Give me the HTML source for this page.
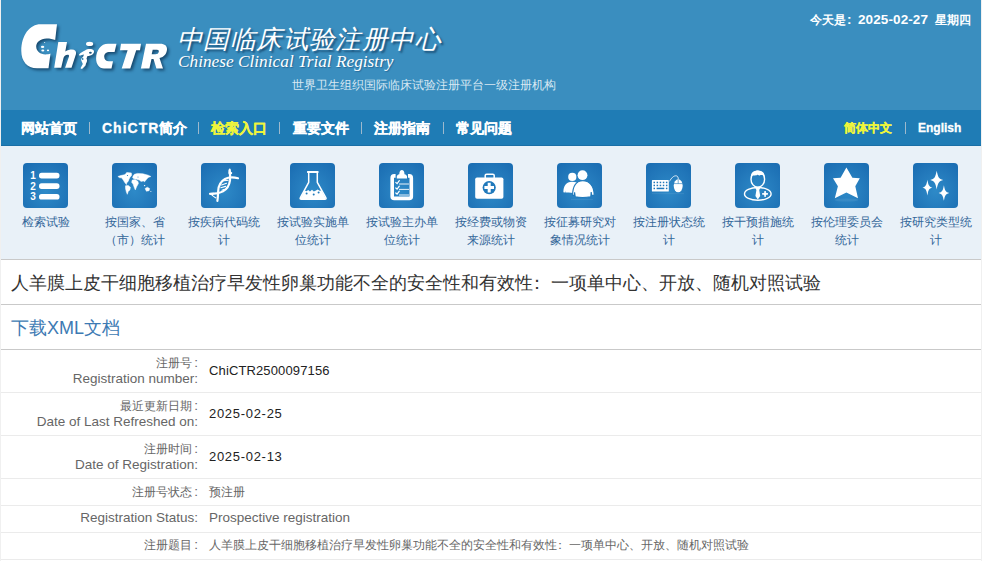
<!DOCTYPE html>
<html><head><meta charset="utf-8">
<style>
*{margin:0;padding:0;box-sizing:border-box;}
html,body{width:982px;height:561px;overflow:hidden;background:#fff;font-family:"Liberation Sans",sans-serif;}
#wrap{position:absolute;left:1px;top:0;width:980px;height:561px;}
body:before{content:"";position:absolute;left:0;top:0;width:1px;height:561px;background:#f0f0f0;}
body:after{content:"";position:absolute;left:981px;top:0;width:1px;height:561px;background:#f0f0f0;}
#header{position:absolute;left:0;top:0;width:980px;height:110px;background:#3a8ebf;}
.td{position:absolute;top:11px;font-size:12px;line-height:18px;color:#fff;font-weight:bold;white-space:nowrap;}
.td.n{font-size:13.5px;letter-spacing:.1px;}
#cn{position:absolute;left:176px;top:24px;font-family:"Liberation Serif",serif;font-size:25.5px;line-height:32px;color:#fff;font-weight:500;font-style:italic;text-shadow:2px 2px 2px rgba(0,30,60,.55);letter-spacing:.4px;}
#en{position:absolute;left:177px;top:52px;font-family:"Liberation Serif",serif;font-size:17.3px;line-height:20px;color:#fff;font-style:italic;text-shadow:1px 1px 1px rgba(0,40,80,.35);}
#who{position:absolute;left:291px;top:76px;font-size:12px;line-height:18px;color:#d8e8f3;}
#logo{position:absolute;left:-1px;top:0;}
#nav{position:absolute;left:0;top:110px;width:980px;height:36px;background:#1f7cb5;border-bottom:1px solid #1a6fa6;}
#nav span{position:absolute;top:0;line-height:36px;font-size:14px;font-weight:bold;color:#fff;-webkit-text-stroke:.3px currentColor;}
#nav span.sep{font-size:0;top:12px;width:1px;height:12px;background:#9db9cd;line-height:0;}
#nav span.y{color:#eef53c;}
#nav span.sm{font-size:12px;}
#icons{position:absolute;left:0;top:146px;width:980px;height:113px;background:#e9f1f8;}
.it{position:absolute;top:0;width:89px;height:113px;text-align:center;}
.ic{position:absolute;left:22px;top:17px;width:45px;height:45px;border-radius:4px;background:radial-gradient(ellipse 70% 75% at 50% 62%,#2e8ac8 0%,#2379bb 60%,#1b6eb3 100%);}
.ic svg{position:absolute;left:0;top:0;}
.lb{position:absolute;left:5px;top:68px;width:79px;font-size:12px;line-height:17.5px;color:#336699;text-align:center;}
#title{position:absolute;left:0;top:259px;width:980px;height:46px;border-top:1px solid #c9c9c9;border-bottom:1px solid #c9c9c9;font-size:18px;line-height:42px;padding-top:2px;color:#333;font-weight:350;padding-left:10px;}
#dl{position:absolute;left:0;top:305px;width:980px;height:45px;border-bottom:1px solid #c9c9c9;font-size:18px;line-height:42px;padding-top:2px;color:#3d7ab3;font-weight:350;padding-left:10px;}
#tbl{position:absolute;left:0;top:350px;width:980px;}
.row{position:absolute;left:0;width:980px;border-bottom:1px solid #ebebeb;}
.l{position:absolute;right:783px;width:200px;text-align:right;font-size:12px;line-height:16px;color:#666;}
.c{font-size:13.5px;padding-left:2px;}
.v{position:absolute;left:208px;font-size:12px;line-height:16px;color:#666;white-space:nowrap;}
.v.d{font-size:13px;color:#222;}
.dt{letter-spacing:.7px;}
.e{font-size:13.5px;}
</style></head><body>
<div id="wrap">
 <div id="header">
  <svg id="logo" width="180" height="80" viewBox="0 0 180 80">
  <g fill="#fff" style="filter:drop-shadow(2px 2px 1.5px rgba(0,30,60,.6))">
  <path fill-rule="evenodd" d="M40.5,24.3 L57,24.3 L55.2,40 C53,38.9 50,38.4 46.5,38.4 C40.5,38.4 36.2,42 36.2,46.6 C36.2,51.4 40.5,54.5 45.5,54.5 C47.5,54.5 49,54.2 50.5,53.6 L48.5,68.3 L37,68.3 C27,68.3 21.3,61 21.3,51 C21.3,35 30,24.3 40.5,24.3 Z"/>
  <path d="M58.3,42.1 L67,42.1 L65.3,51.5 C67.5,50 70,49.5 72,49.5 C75,49.5 76.5,51 76,54 L71.5,67.8 L65.1,67.8 L69,56.5 C69.3,55.3 68.7,54.8 67.6,54.8 C65.5,54.8 64,56.5 63.5,58 L61.2,67.8 L54.2,67.8 Z"/>
  <ellipse cx="89.6" cy="43.9" rx="3.6" ry="2.1"/>
  <path fill-rule="evenodd" d="M79,54.5 C80.5,52.5 83,51.5 85,50.5 C87,49 90,48.8 92.5,49.5 C94.5,50.3 94.5,52.5 93,54 C91.5,55.5 89,56 87.5,56 L86.5,58.5 C87.5,60 87,62 86,63.5 L85.5,65.5 L82,69 L80.5,68.2 L82.8,64 L81.5,61 C80.5,59.5 81.5,57.8 83,57 L84,54.5 C82.5,54.8 81,55.3 79.6,55.8 Z M89,52.8 A1.4,1 0 1 0 91.8,52.8 A1.4,1 0 1 0 89,52.8 Z M81.9,59 A.8,.8 0 1 0 83.4,59 A.8,.8 0 1 0 81.9,59 Z"/>
  <path d="M108,43.7 L116.5,43.7 L114.6,52 L110,52 C106,52 104.2,54 104.2,56.5 C104.2,59.5 106,61.3 109,61.3 L113,61.3 L111.5,68.5 L104,68.5 C99,68.5 96.1,64 96.1,58.5 C96.1,50 101,43.7 108,43.7 Z"/>
  <path d="M121,43.7 L141,43.7 L140,50.2 L136.2,50.2 L130.3,68.5 L121.7,68.5 L127.6,50.2 L120,50.2 Z"/>
  <path fill-rule="evenodd" d="M146,43.7 L160,43.7 C165,43.7 167.3,46 167,49.5 C166.7,54 164,57 159.5,58 L163,68.5 L156.4,68.5 L153.5,59 L151.5,59 L149.4,68.5 L140.9,68.5 Z M152.7,49.8 L157,49.8 C158.5,49.8 159,50.7 158.8,51.8 C158.5,53.5 157.3,54.3 155.5,54.3 L151.7,54.3 Z"/>
  </g>
  <g fill="#fff"><ellipse cx="42.6" cy="46.9" rx="1.7" ry="1.1"/><ellipse cx="42.8" cy="50.5" rx="1.5" ry="1"/><ellipse cx="48" cy="50.4" rx="1.1" ry=".8"/><circle cx="44.7" cy="42.5" r=".5"/></g>
 </svg>
  <div id="cn">中国临床试验注册中心</div>
  <div id="en">Chinese Clinical Trial Registry</div>
  <div id="who">世界卫生组织国际临床试验注册平台一级注册机构</div>
  <div class="td" style="left:809px">今天是</div><div class="td n" style="left:846px">:</div><div class="td n" style="left:857px">2025-02-27</div><div class="td" style="left:934px">星期四</div>
 </div>
 <div id="nav">
  <span style="left:20px">网站首页</span><span class="sep" style="left:88px"></span>
  <span style="left:101px"><i style="font-style:normal;letter-spacing:1px">ChiCTR</i>简介</span><span class="sep" style="left:197px"></span>
  <span class="y" style="left:210px">检索入口</span><span class="sep" style="left:278px"></span>
  <span style="left:292px">重要文件</span><span class="sep" style="left:360px"></span>
  <span style="left:373px">注册指南</span><span class="sep" style="left:442px"></span>
  <span style="left:455px">常见问题</span>
  <span class="y sm" style="left:843px">简体中文</span><span class="sep" style="left:904px"></span>
  <span class="sm" style="left:917px">English</span>
 </div>
 <div id="icons">
<div class="it" style="left:0px"><div class="ic"><svg width="45" height="45" viewBox="0 0 45 45">
<text x="10" y="15.8" font-family="Liberation Sans" font-weight="bold" font-size="10" fill="#fff" text-anchor="middle">1</text>
<text x="10" y="27" font-family="Liberation Sans" font-weight="bold" font-size="10" fill="#fff" text-anchor="middle">2</text>
<text x="10" y="37" font-family="Liberation Sans" font-weight="bold" font-size="10" fill="#fff" text-anchor="middle">3</text>
<rect x="16" y="9.8" width="20.5" height="5.6" rx="2.6" fill="#fff"/>
<rect x="16" y="20.3" width="20.5" height="5.6" rx="2.6" fill="#fff"/>
<rect x="16" y="31" width="20.5" height="5.6" rx="2.6" fill="#fff"/>
</svg></div><div class="lb">检索试验</div></div>
<div class="it" style="left:89px"><div class="ic"><svg width="45" height="45" viewBox="0 0 45 45"><path fill="#fff" stroke="#fff" stroke-width=".5" stroke-linejoin="round" d="M5.9,13.5 L8.6,12.6 L12.6,11.7 L13.9,10.4 L14.8,9.5 L19.3,9.9 L19.7,12.2 L17.9,14.4 L17,16.2 L16.2,18.4 L14.8,19.7 L14.4,21.5 L12.6,19.3 L11.3,17.1 L9.5,14.8 L7.7,14.8 Z"/><path fill="#fff" stroke="#fff" stroke-width=".5" stroke-linejoin="round" d="M13.5,22.8 L16.2,22.4 L18.4,24.2 L17.9,26.9 L16.2,28.6 L15.3,31.3 L14.4,29.1 L13.5,25.5 Z"/><path fill="#fff" stroke="#fff" stroke-width=".5" stroke-linejoin="round" d="M21.1,13 L22.4,11.3 L25.5,10.4 L30.9,10.8 L36.2,12.2 L38.9,13.5 L36.2,14.4 L34.4,16.6 L32.6,18.8 L31.3,17.9 L29.1,18.4 L27.3,17.1 L24.6,16.2 L22,15.7 L20.6,14.8 Z"/><path fill="#fff" stroke="#fff" stroke-width=".5" stroke-linejoin="round" d="M20.2,17.1 L23.3,16.6 L26,18.4 L26.4,20.6 L24.6,23.7 L23.3,26.9 L22,23.7 L21.1,21.1 L19.7,19.3 Z"/><path fill="#fff" stroke="#fff" stroke-width=".5" stroke-linejoin="round" d="M33.1,25.5 L35.3,24.2 L37.6,25.5 L37.1,27.7 L34.4,28.2 Z"/><circle cx="32.6" cy="22.6" r=".7" fill="#fff"/><circle cx="38.9" cy="28.4" r=".5" fill="#fff"/><circle cx="15.5" cy="12.5" r=".6" fill="#2079bb"/><circle cx="26" cy="14" r=".5" fill="#2079bb"/></svg></div><div class="lb">按国家、省（市）统计</div></div>
<div class="it" style="left:178px"><div class="ic"><svg width="45" height="45" viewBox="0 0 45 45">
<g fill="none" stroke="#fff" stroke-linecap="round">
<path stroke-width="2.2" d="M37,15.2 C33,14.2 28,13.8 24,16 C19.5,18.6 17.4,23 17.2,28 C17,32 16.8,35 16.4,37.8"/>
<path stroke-width="2.2" d="M9,30.8 C13,30.8 18,30.6 22,28.4 C26,26.2 28.4,22 29,17.4 C29.3,13 29,9.5 28.6,7"/>
<path stroke-width="1.1" d="M20.6,22 L25.5,20.3 M19.8,24.8 L24.6,23.4 M21,27.3 L23.4,26.3 M23,17.8 L27.2,17.2"/>
</g>
<path fill="#fff" d="M27.4,9.6 L28.2,5.6 L29.4,5.8 L29.6,8.6 L31.2,9.4 L31,11 L27.6,11.2 Z"/>
<path fill="#fff" d="M9,30 L13,29.8 L12,32.4 L15.6,34.8 L14.6,35.6 L10.6,32.4 Z"/>
</svg></div><div class="lb">按疾病代码统计</div></div>
<div class="it" style="left:267px"><div class="ic"><svg width="45" height="45" viewBox="0 0 45 45">
<rect x="17" y="8" width="11.6" height="1.9" rx=".6" fill="#fff"/>
<path fill="none" stroke="#fff" stroke-width="1.5" stroke-linejoin="round" d="M18.7,9.8 L18.7,19.3 L10.4,34.6 C9.8,35.8 10.2,36.3 11.4,36.3 L34.8,36.3 C36,36.3 36.4,35.8 35.8,34.6 L27.3,19.3 L27.3,9.8"/>
<path fill="#fff" d="M14.6,27.6 L16.5,28.2 L18.2,27 L20,28.6 L22,26.8 L23.8,28.4 L26,27.6 L27.6,26.6 L29.8,27.8 L31.4,27.4 L35.2,34.4 C35.7,35.4 35.4,35.9 34.4,35.9 L11.8,35.9 C10.8,35.9 10.5,35.4 11,34.4 Z"/>
<circle cx="16.6" cy="30.5" r="1" fill="#2079bb"/><circle cx="23.7" cy="31.4" r="1" fill="#2079bb"/><circle cx="28.6" cy="29.6" r="1" fill="#2079bb"/>
</svg></div><div class="lb">按试验实施单位统计</div></div>
<div class="it" style="left:356px"><div class="ic"><svg width="45" height="45" viewBox="0 0 45 45">
<path fill="none" stroke="#fff" stroke-width="3.6" stroke-linejoin="round" d="M16.6,12.9 L15.2,12.9 Q13.2,12.9 13.2,14.9 L13.2,33.4 Q13.2,35.4 15.2,35.4 L30.3,35.4 Q32.3,35.4 32.3,33.4 L32.3,14.9 Q32.3,12.9 30.3,12.9 L29,12.9"/>
<path fill="#fff" d="M17.8,15.5 L17.8,13.6 C17.8,12.4 18.8,11.6 20.3,11.2 C20.4,8.6 21.4,7.1 22.9,7.1 C24.4,7.1 25.4,8.6 25.5,11.2 C27,11.6 28,12.4 28,13.6 L28,15.5 Z"/>
<g fill="none" stroke="#fff" stroke-linecap="round">
<path stroke-width="1.2" d="M16.8,19.4 L18.1,20.6 L20.3,17.6 M16.8,25 L18.1,26.2 L20.3,23.2 M16.8,30 L18.1,31.2 L20.3,28.2"/>
<path stroke-width=".9" d="M20.4,21 L29.6,21 M20.4,26.4 L29.6,26.4 M20.4,32 L29.6,32"/>
</g>
</svg></div><div class="lb">按试验主办单位统计</div></div>
<div class="it" style="left:445px"><div class="ic"><svg width="45" height="45" viewBox="0 0 45 45">
<rect x="17.2" y="11.2" width="9" height="4.6" rx="1.4" fill="none" stroke="#fff" stroke-width="1.5"/>
<rect x="7.2" y="14.4" width="28.2" height="21.4" rx="1.8" fill="#fff"/>
<circle cx="21.2" cy="24.6" r="6.6" fill="#2079bb"/>
<path fill="#fff" d="M19.7,19.8 H22.7 V23.1 H26 V26.1 H22.7 V29.4 H19.7 V26.1 H16.4 V23.1 H19.7 Z"/>
</svg></div><div class="lb">按经费或物资来源统计</div></div>
<div class="it" style="left:534px"><div class="ic"><svg width="45" height="45" viewBox="0 0 45 45">
<circle cx="15.3" cy="13.9" r="4.1" fill="#fff"/>
<path fill="#fff" d="M6.4,29.2 C6.4,23 9,18.8 15,18.8 C18,18.8 20,19.6 21.4,21 L19,30 L16.4,30 C14,29.6 12,29.2 10,29.6 L8.4,29.6 L8.4,27.6 L8,29.6 Z"/>
<circle cx="25.5" cy="12.2" r="4.9" fill="#fff"/>
<path fill="#fff" stroke="#2079bb" stroke-width="1.1" d="M15.6,32.4 C15.6,22.6 19.5,17.8 25.8,17.8 C32.2,17.8 37.2,22.6 37.2,32.4 L34.6,32.4 L34.2,29 L33.8,33.8 C29,34.6 22,34.6 18.2,33.8 L17.6,29.2 L17.4,32.4 Z"/>
<rect x="14" y="36" width="22" height="1" fill="#fff" opacity=".07"/>
</svg></div><div class="lb">按征募研究对象情况统计</div></div>
<div class="it" style="left:623px"><div class="ic"><svg width="45" height="45" viewBox="0 0 45 45">
<rect x="5.9" y="17.1" width="16.9" height="11.5" rx=".6" fill="#fff"/>
<g fill="#2079bb">
<rect x="7.5" y="18.7" width="1.5" height="1.5"/><rect x="10.6" y="18.7" width="1.5" height="1.5"/><rect x="13.7" y="18.7" width="1.5" height="1.5"/><rect x="16.8" y="18.7" width="1.5" height="1.5"/><rect x="19.9" y="18.7" width="1.5" height="1.5"/>
<rect x="7.5" y="21.7" width="1.5" height="1.5"/><rect x="10.6" y="21.7" width="1.5" height="1.5"/><rect x="13.7" y="21.7" width="1.5" height="1.5"/><rect x="16.8" y="21.7" width="1.5" height="1.5"/><rect x="19.9" y="21.7" width="1.5" height="1.5"/>
<rect x="7.5" y="24.7" width="1.5" height="1.5"/><rect x="10.6" y="24.7" width="7.7" height="1.5"/><rect x="19.9" y="24.7" width="1.5" height="1.5"/>
</g>
<path fill="none" stroke="#fff" stroke-width=".8" d="M23.4,18.4 C25.5,15 27.5,12.6 30.2,12.8 C31.8,13 32.3,14.6 32.3,16.2"/>
<ellipse cx="32.2" cy="22.8" rx="4.5" ry="6.5" fill="#fff"/>
<path fill="none" stroke="#2079bb" stroke-width=".6" d="M27.8,20.6 L36.6,20.6 M32.2,16.8 L32.2,20.6"/>
<rect x="6" y="30" width="32" height="1.2" fill="#fff" opacity=".07"/>
</svg></div><div class="lb">按注册状态统计</div></div>
<div class="it" style="left:712px"><div class="ic"><svg width="45" height="45" viewBox="0 0 45 45">
<path fill="#fff" d="M16,13.8 C15.8,9.8 18.6,7.6 22.8,7.6 C27,7.6 29.8,9.8 29.6,13.8 C28.6,12.6 27.4,11.6 24.6,12.4 C23.6,12.8 22.8,12.2 22.6,11.6 C22.2,12.4 20.8,12.6 18.6,12.4 C17.4,12.4 16.6,13 16,13.8 Z"/>
<ellipse cx="22.8" cy="16.2" rx="6.8" ry="8" fill="none" stroke="#fff" stroke-width="1.4"/>
<ellipse cx="22.8" cy="30.9" rx="13.3" ry="6.4" fill="none" stroke="#fff" stroke-width="1.4"/>
<path fill="#fff" d="M20.2,24.8 L25.4,24.8 L24.2,27 L25.2,33 L22.8,36.6 L20.4,33 L21.4,27 Z"/>
<path fill="#fff" stroke="#2079bb" stroke-width="1" d="M28.8,27.4 H31.4 V29.6 H33.6 V32.2 H31.4 V34.4 H28.8 V32.2 H26.6 V29.6 H28.8 Z"/>
</svg></div><div class="lb">按干预措施统计</div></div>
<div class="it" style="left:801px"><div class="ic"><svg width="45" height="45" viewBox="0 0 45 45">
<path fill="#fff" d="M22.4,4.6 L28.4,14.8 L35.8,15.3 L31.3,23.3 L34,35.3 L22.4,29.5 L10.8,35.3 L13.9,23.3 L9,15.3 L16.6,14.8 Z"/>
<ellipse cx="22.4" cy="37" rx="12" ry="1.6" fill="#fff" opacity=".08"/>
</svg></div><div class="lb">按伦理委员会统计</div></div>
<div class="it" style="left:890px"><div class="ic"><svg width="45" height="45" viewBox="0 0 45 45"><path fill="#fff" d="M23.7,7.700000000000001 C25.13,14.468 25.65,15.670000000000002 30.2,17.1 C25.65,18.53 25.13,19.732000000000003 23.7,26.5 C22.27,19.732000000000003 21.75,18.53 17.2,17.1 C21.75,15.670000000000002 22.27,14.468 23.7,7.700000000000001 Z"/><path fill="#fff" d="M14.4,16.8 C15.478,22.416 15.870000000000001,23.522000000000002 19.3,24.6 C15.870000000000001,25.678 15.478,26.784000000000002 14.4,32.4 C13.322000000000001,26.784000000000002 12.93,25.678 9.5,24.6 C12.93,23.522000000000002 13.322000000000001,22.416 14.4,16.8 Z"/><path fill="#fff" d="M30.9,22.2 C32.065999999999995,27.816 32.489999999999995,28.834 36.199999999999996,30 C32.489999999999995,31.166 32.065999999999995,32.184 30.9,37.8 C29.733999999999998,32.184 29.31,31.166 25.599999999999998,30 C29.31,28.834 29.733999999999998,27.816 30.9,22.2 Z"/></svg></div><div class="lb">按研究类型统计</div></div>
 </div>
 <div id="title">人羊膜上皮干细胞移植治疗早发性卵巢功能不全的安全性和有效性<span style="position:relative;left:-5px">：</span>一项单中心、开放、随机对照试验</div>
 <div id="dl">下载XML文档</div>
 <div id="tbl">
  <div class="row" style="top:0;height:43px"><div class="l" style="top:5px">注册号<span class="c">:</span><br><span class="e">Registration number:</span></div><div class="v d" style="top:13px;letter-spacing:.13px">ChiCTR2500097156</div></div>
  <div class="row" style="top:43px;height:43px"><div class="l" style="top:5px">最近更新日期<span class="c">:</span><br><span class="e">Date of Last Refreshed on:</span></div><div class="v d dt" style="top:13px">2025-02-25</div></div>
  <div class="row" style="top:86px;height:43px"><div class="l" style="top:5px">注册时间<span class="c">:</span><br><span class="e">Date of Registration:</span></div><div class="v d dt" style="top:13px">2025-02-13</div></div>
  <div class="row" style="top:129px;height:27px"><div class="l" style="top:5px">注册号状态<span class="c">:</span></div><div class="v" style="top:5px">预注册</div></div>
  <div class="row" style="top:156px;height:27px"><div class="l" style="top:4px"><span class="e">Registration Status:</span></div><div class="v e" style="top:4px">Prospective registration</div></div>
  <div class="row" style="top:183px;height:27px"><div class="l" style="top:4px">注册题目<span class="c">:</span></div><div class="v" style="top:4px">人羊膜上皮干细胞移植治疗早发性卵巢功能不全的安全性和有效性<span style="position:relative;left:-3px">：</span>一项单中心、开放、随机对照试验</div></div>
 </div>
</div>
</body></html>
